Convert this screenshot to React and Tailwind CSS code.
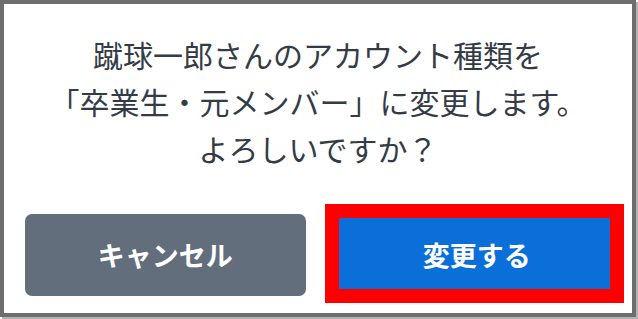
export default function App() {
  return (
    <div className="w-[638px] h-[319px] bg-white" style={{ fontFamily: '"Noto Sans CJK JP", "Noto Sans", sans-serif' }}>
      <div className="relative w-[636px] h-[317px] border-4 border-[#6e6e6e] bg-white shadow-[2px_2px_0_#b3b3b3] flex flex-col">
        <div className="pt-[27px] text-center text-[30px] leading-[47px] text-[#333c46]">
          <p>蹴球一郎さんのアカウント種類を</p>
          <p>「卒業生・元メンバー」に変更します。</p>
          <p>よろしいですか？</p>
        </div>
        <div className="mt-[42px] pl-[21px] pr-[15px] grid grid-cols-2 gap-[31px]">
          <button className="h-[82px] rounded-[7px] bg-[#636e7d] text-white text-[27px] font-bold">キャンセル</button>
          <button className="h-[82px] rounded-[7px] bg-[#0b6fd9] text-white text-[27px] font-bold">変更する</button>
        </div>
        <div className="absolute left-[321px] top-[200px] w-[299px] h-[99px] border-[14px] border-[#ff0000] pointer-events-none" />
      </div>
    </div>
  );
}
